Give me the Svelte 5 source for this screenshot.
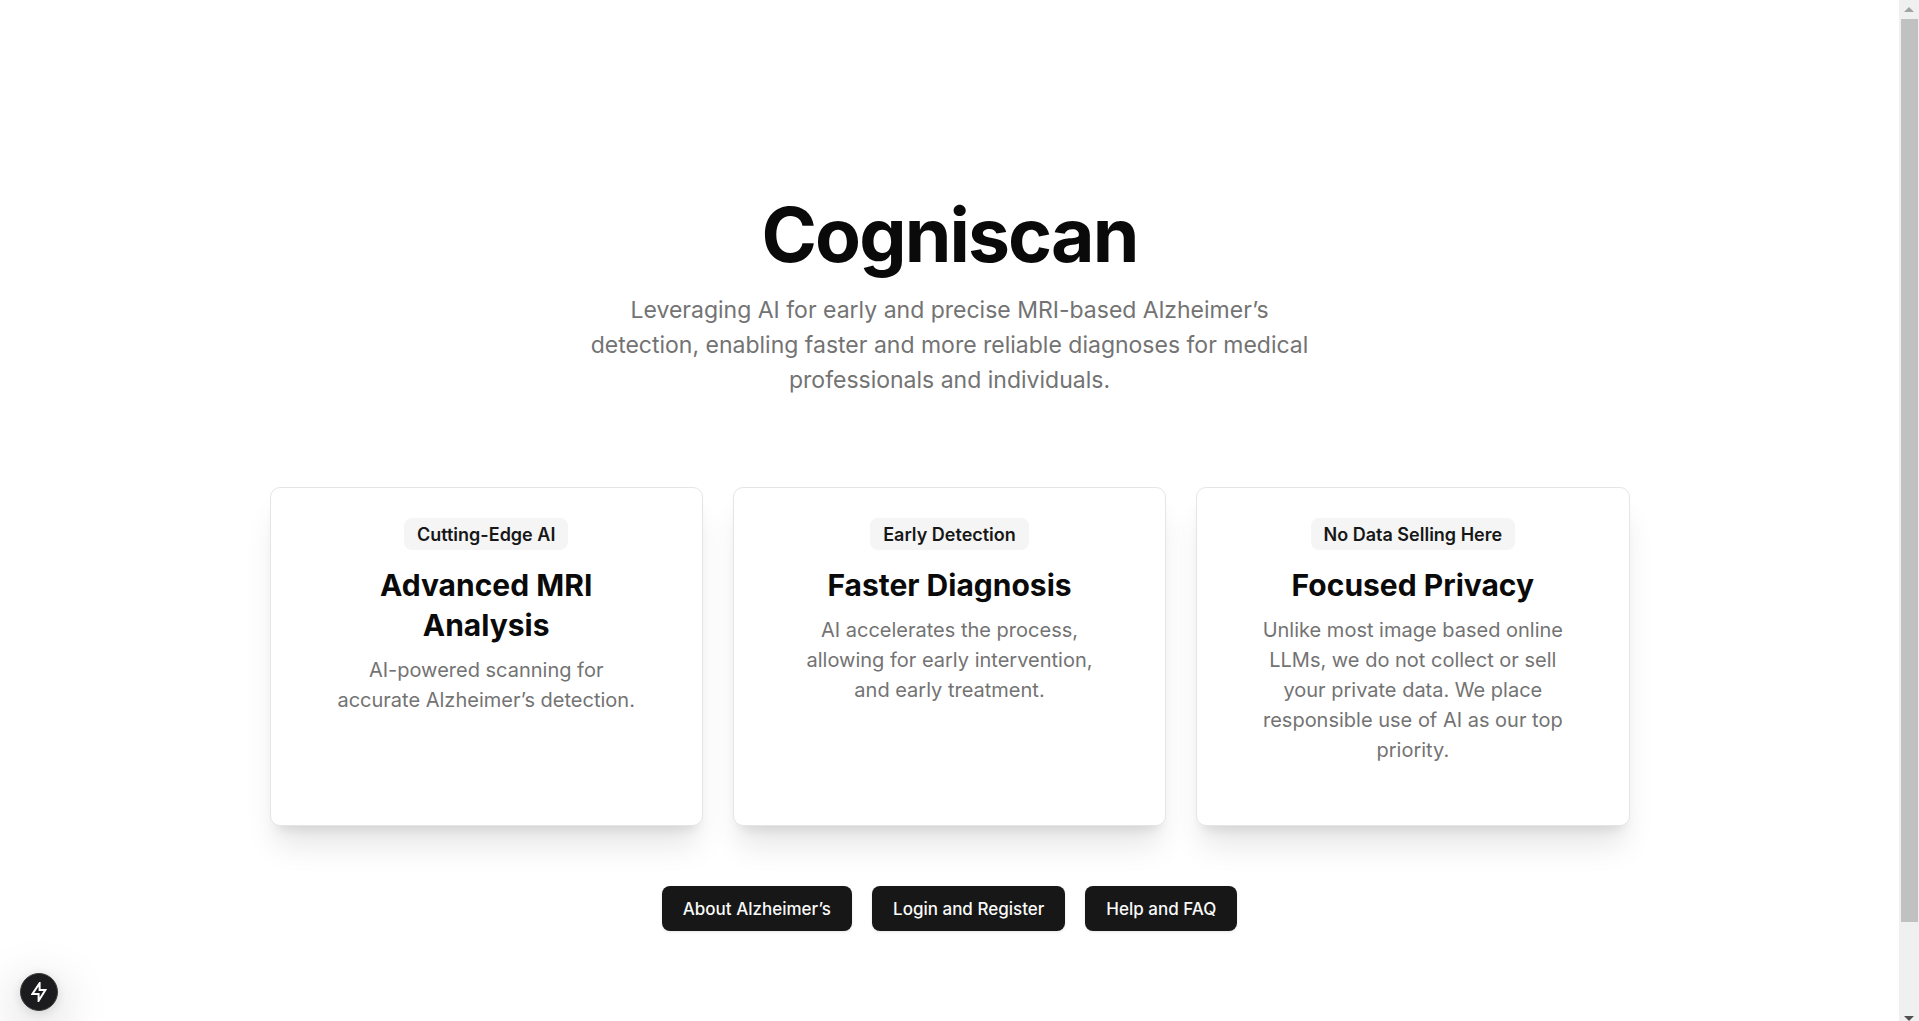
<script>
  const features = [
    {
      badge: 'Cutting-Edge AI',
      title: 'Advanced MRI Analysis',
      text: 'AI-powered scanning for accurate Alzheimer’s detection.'
    },
    {
      badge: 'Early Detection',
      title: 'Faster Diagnosis',
      text: 'AI accelerates the process, allowing for early intervention, and early treatment.'
    },
    {
      badge: 'No Data Selling Here',
      title: 'Focused Privacy',
      text: 'Unlike most image based online LLMs, we do not collect or sell your private data. We place responsible use of AI as our top priority.'
    }
  ];
  const links = [
    { label: 'About Alzheimer’s', href: '#about' },
    { label: 'Login and Register', href: '#login' },
    { label: 'Help and FAQ', href: '#help' }
  ];
</script>

<div class="window">
  <main>
    <header>
      <h1>Cogniscan</h1>
      <p>
        Leveraging AI for early and precise MRI-based Alzheimer’s detection, enabling faster and
        more reliable diagnoses for medical professionals and individuals.
      </p>
    </header>

    <section class="cards">
      {#each features as feature}
        <article>
          <span class="badge">{feature.badge}</span>
          <h2>{feature.title}</h2>
          <p>{feature.text}</p>
        </article>
      {/each}
    </section>

    <nav>
      {#each links as link}
        <a href={link.href}>{link.label}</a>
      {/each}
    </nav>
  </main>

  <div class="scrollbar" aria-hidden="true">
    <svg class="up" viewBox="0 0 10 5"><path d="M5 0L10 5H0z" /></svg>
    <div class="track"><div class="thumb"></div></div>
    <svg class="down" viewBox="0 0 10 5"><path d="M0 0H10L5 5z" /></svg>
  </div>
</div>

<button class="indicator" aria-label="Development tools">
  <svg viewBox="0 0 16 20"><path d="M8.6 1.2V8H14.4L7.6 18.8V12H1.4z" /></svg>
</button>

<style>
  :global(body) {
    background: #fff;
  }
  .window {
    display: flex;
    min-height: 100vh;
    font-family: Inter, 'Liberation Sans', sans-serif;
    color: #0a0a0a;
  }
  main {
    flex: 1;
    display: flex;
    flex-direction: column;
    align-items: center;
    padding: 197px 20px 60px;
  }
  header {
    display: flex;
    flex-direction: column;
    align-items: center;
    gap: 21px;
    text-align: center;
  }
  h1,
  h2,
  p {
    margin: 0;
  }
  h1 {
    font-size: 75px;
    line-height: 75px;
    font-weight: 700;
    letter-spacing: -0.025em;
  }
  header p {
    max-width: 720px;
    font-size: 23px;
    line-height: 35px;
    color: #737373;
  }
  .cards {
    display: grid;
    grid-template-columns: repeat(3, 1fr);
    gap: 30px;
    width: 100%;
    max-width: 1360px;
    margin-top: 89px;
  }
  article {
    display: flex;
    flex-direction: column;
    align-items: center;
    padding: 30px 60px 60px;
    border: 1px solid #e5e5e5;
    border-radius: 10px;
    background: #fff;
    box-shadow:
      0 25px 31px -6px rgba(0, 0, 0, 0.1),
      0 10px 12px -7px rgba(0, 0, 0, 0.1);
    text-align: center;
  }
  .badge {
    padding: 2px 13px 0;
    border-radius: 8px;
    background: #f5f5f5;
    color: #171717;
    font-size: 18px;
    line-height: 30px;
    font-weight: 600;
  }
  h2 {
    margin-top: 15px;
    font-size: 30px;
    line-height: 40px;
    font-weight: 700;
  }
  article p {
    margin-top: 10px;
    font-size: 20px;
    line-height: 30px;
    color: #737373;
  }
  nav {
    display: flex;
    gap: 20px;
    margin-top: 60px;
  }
  nav a {
    padding: 1px 21px 0;
    border-radius: 8px;
    background: #171717;
    box-shadow: 0 1px 3px rgba(0, 0, 0, 0.1);
    color: #fafafa;
    font-size: 17px;
    line-height: 44px;
    font-weight: 500;
    text-decoration: none;
  }
  .scrollbar {
    display: flex;
    flex-direction: column;
    align-items: center;
    gap: 7px;
    box-sizing: border-box;
    width: 20px;
    height: 100vh;
    padding-top: 7px;
    background: #f0f0f0;
  }
  .scrollbar svg {
    width: 10px;
    height: 5px;
  }
  .up {
    fill: #a3a3a3;
  }
  .down {
    fill: #505050;
  }
  .track {
    flex: 1;
    width: 17px;
  }
  .thumb {
    height: 91.2%;
    background: #c1c1c1;
  }
  .indicator {
    position: fixed;
    left: 20px;
    bottom: 10px;
    display: flex;
    align-items: center;
    justify-content: center;
    width: 38px;
    height: 38px;
    padding: 0;
    border: 1px solid #3c3c3e;
    border-radius: 50%;
    background: #1c1c1e;
    box-shadow:
      0 14px 50px rgba(0, 0, 0, 0.25),
      0 2px 12px rgba(0, 0, 0, 0.12);
  }
  .indicator svg {
    width: 16px;
    height: 20px;
    fill: none;
    stroke: #fff;
    stroke-width: 2;
  }
</style>
